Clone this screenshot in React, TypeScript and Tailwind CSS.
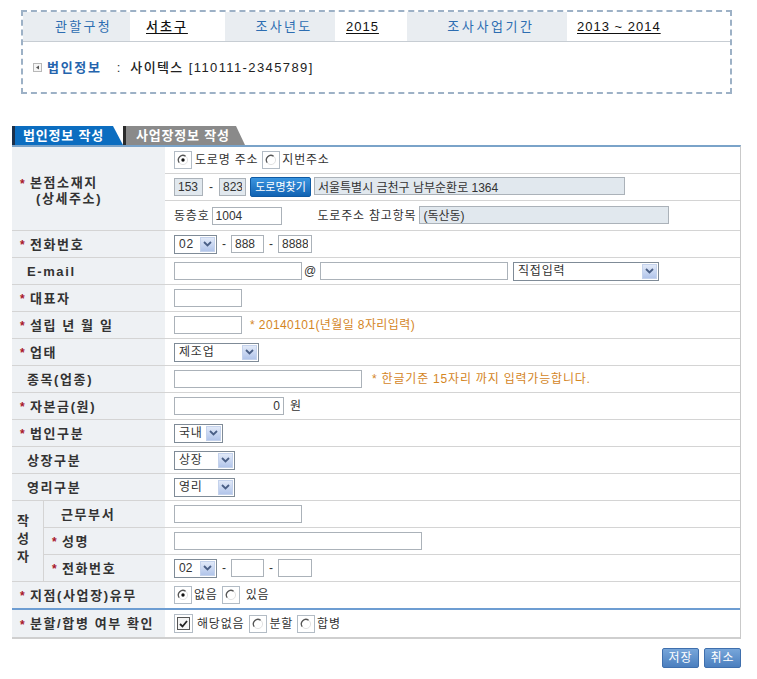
import React from "react";

const FONT = "font-['Liberation_Sans','Noto_Sans_CJK_KR',sans-serif]";

function Star() {
  return <span className="text-[#a8172b] text-[12px] w-[10px] shrink-0 leading-none pt-[2px] tracking-normal">*</span>;
}

function Label({ star, children, className = "" }: { star?: boolean; children: React.ReactNode; className?: string }) {
  return (
    <div className={`w-[153px] shrink-0 bg-[#eef1f4] flex items-center text-[13px] font-bold text-[#333] leading-none tracking-[1.6px] ${star ? "pl-[8px]" : "pl-[15px]"} ${className}`}>
      {star && <Star />}
      <span>{children}</span>
    </div>
  );
}

function Row({ label, star, children }: { label: React.ReactNode; star?: boolean; children?: React.ReactNode }) {
  return (
    <div className="flex h-[27px] border-b border-[#d4d4d4]">
      <Label star={star}>{label}</Label>
      <div className="flex-1 flex items-center pl-[9px] text-[12px] text-[#333] tracking-[0.8px]">{children}</div>
    </div>
  );
}

function Input({ value = "", w, gray, right }: { value?: string; w: string; gray?: boolean; right?: boolean }) {
  return (
    <input
      readOnly
      value={value}
      className={`${w} h-[18px] border border-[#abb2b9] px-[3px] text-[12px] leading-none tracking-normal text-[#333] outline-none ${gray ? "bg-[#e1e8ee]" : "bg-white"} ${right ? "text-right" : ""}`}
    />
  );
}

function Select({ value, w }: { value: string; w: string }) {
  return (
    <div className={`${w} h-[19px] border border-[#7f8b97] bg-white flex items-center justify-between pl-[4px] pr-px text-[12px] text-[#333] leading-none`}>
      <span>{value}</span>
      <span className="w-[15px] h-[15px] bg-gradient-to-b from-[#e1e9f8] to-[#b2c5ea] border border-[#c4d2ec] flex items-center justify-center">
        <svg width="9" height="6" viewBox="0 0 9 6">
          <path d="M1 1 L4.5 4.5 L8 1" stroke="#4a5f86" strokeWidth="1.8" fill="none" />
        </svg>
      </span>
    </div>
  );
}

function Radio({ checked }: { checked?: boolean }) {
  return (
    <span className="w-[18px] h-[18px] border border-[#b3bcc5] bg-white flex items-center justify-center shrink-0">
      <svg width="12" height="12" viewBox="0 0 12 12">
        <circle cx="6" cy="6" r="4.6" fill="#fff" stroke="#e2e2e2" strokeWidth="1" />
        <path d="M2.2 8.6 A4.6 4.6 0 0 1 8.6 2.2" stroke="#555" strokeWidth="1.3" fill="none" />
        {checked && <circle cx="6" cy="6" r="1.7" fill="#111" />}
      </svg>
    </span>
  );
}

function Check() {
  return (
    <span className="w-[19px] h-[19px] border border-[#b3bcc5] bg-white flex items-center justify-center shrink-0">
      <span className="w-[13px] h-[13px] border border-[#555] bg-[#f4f4f4] flex items-center justify-center">
        <svg width="9" height="8" viewBox="0 0 9 8">
          <path d="M1 4 L3.5 6.5 L8 1" stroke="#222" strokeWidth="1.8" fill="none" />
        </svg>
      </span>
    </span>
  );
}

function Dash() {
  return <span className="mx-[5px] tracking-normal">-</span>;
}

function Note({ children }: { children: React.ReactNode }) {
  return <span className="text-[#d4861f] text-[12px]">* {children}</span>;
}

const groupRows = [
  { label: "근무부서", star: false, kind: "dept", h: "h-[27px] border-b" },
  { label: "성명", star: true, kind: "name", h: "h-[27px] border-b" },
  { label: "전화번호", star: true, kind: "tel", h: "h-[26px]" },
];

export default function App() {
  return (
    <div className={`${FONT} w-[757px] h-[679px] bg-white pt-[10px]`}>
      {/* summary box */}
      <div className="ml-[21px] w-[711px] h-[84px] border-2 border-dashed border-[#9db1c6] flex flex-col">
        <div className="flex h-[30px] border-b border-[#c7cdd3] text-[13px] leading-none">
          <div className="w-[107px] bg-[#e9edf1] flex items-center justify-center pl-[14px] text-[#2d6db1] tracking-[2.3px]">관할구청</div>
          <div className="w-[95px] flex items-center pl-[16px] underline underline-offset-2 text-[#111] font-medium tracking-[2px]">서초구</div>
          <div className="w-[110px] bg-[#e9edf1] flex items-center justify-center pl-[8px] text-[#2d6db1] tracking-[2.3px]">조사년도</div>
          <div className="w-[72px] flex items-center pl-[11px] underline underline-offset-2 text-[#111] font-medium tracking-[1px]">2015</div>
          <div className="w-[160px] bg-[#e9edf1] flex items-center justify-center pl-[8px] text-[#2d6db1] tracking-[2.6px]">조사사업기간</div>
          <div className="flex-1 flex items-center pl-[10px] underline underline-offset-2 text-[#111] font-medium tracking-[1px]">2013 ~ 2014</div>
        </div>
        <div className="flex-1 flex items-center pl-[10px] text-[13px] leading-none">
          <span className="w-[9px] h-[9px] border border-[#b8b8b8] bg-[#f6f6f6] flex items-center justify-center mr-[5px]">
            <svg width="5" height="5" viewBox="0 0 5 5">
              <path d="M4 0.5 L1 2.5 L4 4.5 Z" fill="#555" />
            </svg>
          </span>
          <span className="font-bold text-[#2464ad] tracking-[1.7px]">법인정보</span>
          <span className="ml-[15px] text-[#333]">:</span>
          <span className="ml-[10px] text-[#222] font-medium tracking-[1.4px]">사이텍스 [110111-2345789]</span>
        </div>
      </div>

      {/* tabs */}
      <div className="ml-[12px] mt-[32px] flex h-[19px] text-[13px] font-bold text-white leading-none tracking-[0.8px]">
        <div className="w-[111px] bg-[#0b6dc0] border-l-[3px] border-[#1c304a] flex items-center pl-[8px] [clip-path:polygon(0_0,calc(100%_-_10px)_0,100%_100%,0_100%)]">
          법인정보 작성
        </div>
        <div className="w-[122px] bg-[#8a8a8a] border-l-[3px] border-[#2b2b2b] flex items-center pl-[10px] [clip-path:polygon(0_0,calc(100%_-_9px)_0,100%_100%,0_100%)]">
          사업장정보 작성
        </div>
      </div>

      {/* form table */}
      <div className="ml-[12px] w-[729px] border-t-2 border-[#7aa3c9] border-r border-r-[#c9c9c9]">
        <div className="flex border-b border-[#d4d4d4]">
          <div className="w-[153px] shrink-0 bg-[#eef1f4] flex flex-col justify-center pl-[8px] text-[13px] font-bold text-[#333] leading-[16px] pt-[4px] tracking-[1.6px]">
            <div className="flex items-center">
              <Star />
              <span>본점소재지</span>
            </div>
            <div className="pl-[16px]">(상세주소)</div>
          </div>
          <div className="flex-1 flex flex-col text-[12px] text-[#333] tracking-[0.8px]">
            <div className="h-[27px] border-b border-[#d4d4d4] flex items-center pl-[9px]">
              <Radio checked />
              <span className="ml-[3px]">도로명 주소</span>
              <span className="ml-[4px]"><Radio /></span>
              <span className="ml-[2px]">지번주소</span>
            </div>
            <div className="h-[27px] border-b border-[#d4d4d4] flex items-center pl-[9px]">
              <Input value="153" w="w-[29px]" gray />
              <span className="mx-[6px] tracking-normal">-</span>
              <Input value="823" w="w-[27px]" gray />
              <span className="ml-[4px] w-[61px] h-[20px] rounded-[2px] bg-gradient-to-b from-[#3a95e0] to-[#1163b3] border border-[#0f5aa3] text-white text-[11px] tracking-normal flex items-center justify-center leading-none">도로명찾기</span>
              <span className="ml-[3px]"><Input value="서울특별시 금천구 남부순환로 1364" w="w-[311px]" gray /></span>
            </div>
            <div className="h-[29px] flex items-center pl-[9px]">
              <span>동층호</span>
              <span className="ml-[2px]"><Input value="1004" w="w-[70px]" /></span>
              <span className="ml-[36px]">도로주소 참고항목</span>
              <span className="ml-[3px]"><Input value="(독산동)" w="w-[250px]" gray /></span>
            </div>
          </div>
        </div>

        <Row label="전화번호" star>
          <Select value="02" w="w-[43px]" />
          <Dash />
          <Input value="888" w="w-[33px]" />
          <Dash />
          <Input value="8888" w="w-[34px]" />
        </Row>
        <Row label="E-mail">
          <Input w="w-[128px]" />
          <span className="w-[18px] pl-[2px] tracking-normal">@</span>
          <Input w="w-[188px]" />
          <span className="ml-[5px]"><Select value="직접입력" w="w-[146px]" /></span>
        </Row>
        <Row label="대표자" star>
          <Input w="w-[68px]" />
        </Row>
        <Row label="설립 년 월 일" star>
          <Input w="w-[68px]" />
          <span className="ml-[8px] tracking-[0.4px]"><Note>20140101(년월일 8자리입력)</Note></span>
        </Row>
        <Row label="업태" star>
          <Select value="제조업" w="w-[85px]" />
        </Row>
        <Row label="종목(업종)">
          <Input w="w-[188px]" />
          <span className="ml-[10px]"><Note>한글기준 15자리 까지 입력가능합니다.</Note></span>
        </Row>
        <Row label="자본금(원)" star>
          <Input value="0" w="w-[110px]" right />
          <span className="ml-[6px]">원</span>
        </Row>
        <Row label="법인구분" star>
          <Select value="국내" w="w-[49px]" />
        </Row>
        <Row label="상장구분">
          <Select value="상장" w="w-[61px]" />
        </Row>
        <Row label="영리구분">
          <Select value="영리" w="w-[61px]" />
        </Row>

        {/* 작성자 group */}
        <div className="flex border-b border-[#d4d4d4]">
          <div className="w-[32px] shrink-0 bg-[#eef1f4] border-r border-[#d4d4d4] flex flex-col justify-center pl-[5px] text-[13px] font-bold text-[#333] leading-[18px] pb-[4px]">
            <span className="h-[18px]">작</span>
            <span className="h-[18px]">성</span>
            <span className="h-[18px]">자</span>
          </div>
          <div className="flex-1 flex flex-col">
            {groupRows.map((r) => (
              <div key={r.label} className={`flex ${r.h} border-[#d4d4d4]`}>
                <div className={`w-[121px] shrink-0 bg-[#eef1f4] flex items-center text-[13px] font-bold text-[#333] leading-none tracking-[1.6px] ${r.star ? "pl-[8px]" : "pl-[17px]"}`}>
                  {r.star && <Star />}
                  <span>{r.label}</span>
                </div>
                <div className="flex-1 flex items-center pl-[9px] text-[12px] text-[#333]">
                  {r.kind === "dept" && <Input w="w-[128px]" />}
                  {r.kind === "name" && <Input w="w-[248px]" />}
                  {r.kind === "tel" && (
                    <>
                      <Select value="02" w="w-[43px]" />
                      <Dash />
                      <Input w="w-[33px]" />
                      <Dash />
                      <Input w="w-[34px]" />
                    </>
                  )}
                </div>
              </div>
            ))}
          </div>
        </div>

        <Row label="지점(사업장)유무" star>
          <Radio checked />
          <span className="ml-[2px]">없음</span>
          <span className="ml-[4px]"><Radio /></span>
          <span className="ml-[6px]">있음</span>
        </Row>
        <div className="flex h-[31px] border-t-2 border-t-[#6d9dd2] border-b-2 border-b-[#cfcfcf] -mt-px">
          <Label star className="tracking-[1.2px]">분할/합병 여부 확인</Label>
          <div className="flex-1 flex items-center pl-[9px] text-[12px] text-[#333] tracking-[0.8px]">
            <Check />
            <span className="ml-[4px]">해당없음</span>
            <span className="ml-[5px]"><Radio /></span>
            <span className="ml-[2px]">분할</span>
            <span className="ml-[4px]"><Radio /></span>
            <span className="ml-[2px]">합병</span>
          </div>
        </div>
      </div>

      {/* buttons */}
      <div className="w-[741px] flex justify-end gap-[5px] mt-[9px] text-[12px] text-white leading-none tracking-[1px]">
        <span className="w-[37px] h-[20px] rounded-[2px] bg-gradient-to-b from-[#77a6da] to-[#4b7fbf] border border-[#3f6fad] flex items-center justify-center">저장</span>
        <span className="w-[37px] h-[20px] rounded-[2px] bg-gradient-to-b from-[#77a6da] to-[#4b7fbf] border border-[#3f6fad] flex items-center justify-center">취소</span>
      </div>
    </div>
  );
}
